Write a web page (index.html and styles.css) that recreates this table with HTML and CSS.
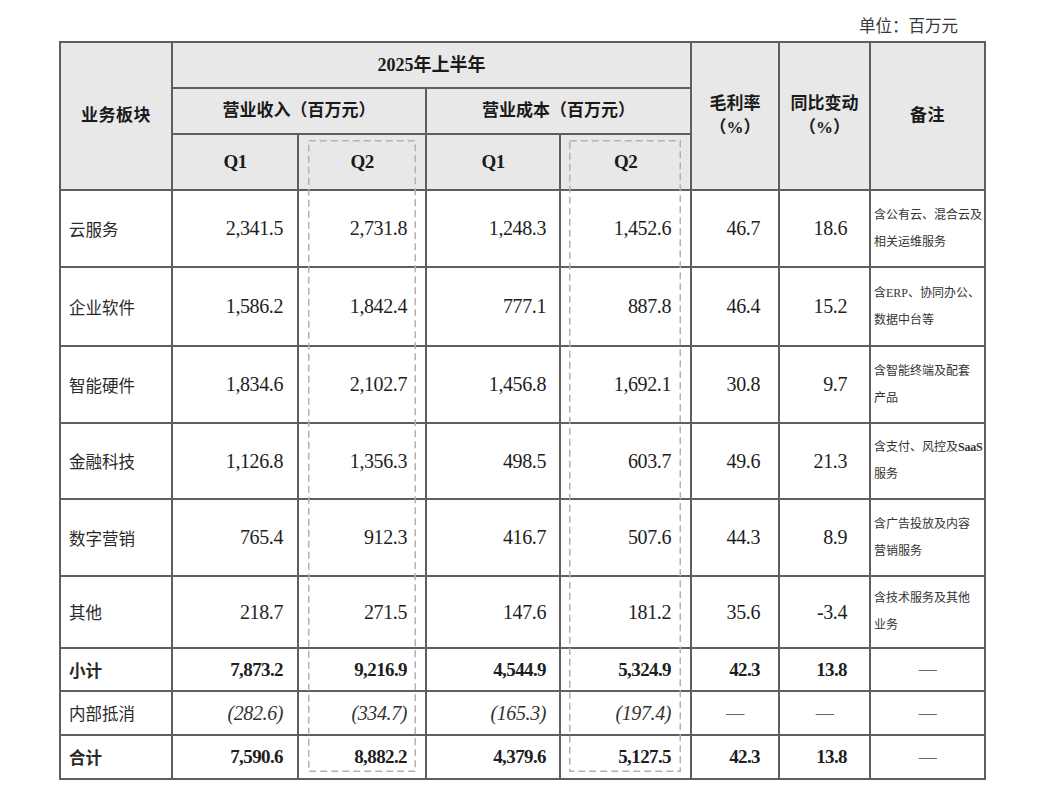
FILE: index.html
```html
<!DOCTYPE html>
<html lang="zh-CN">
<head>
<meta charset="utf-8">
<title>2025年上半年业务板块</title>
<link rel="stylesheet" href="styles.css">
</head>
<body>
<div class="page">
  <div class="unit">单位：百万元</div>
  <div class="table-wrap">
    <table class="fin">
      <colgroup>
        <col class="c1"><col class="c2"><col class="c3"><col class="c4"><col class="c5"><col class="c6"><col class="c7"><col class="c8">
      </colgroup>
      <thead>
        <tr class="h1">
          <th rowspan="3" class="seg">业务板块</th>
          <th colspan="4" class="year">2025年上半年</th>
          <th rowspan="3" class="two">毛利率<br>（%）</th>
          <th rowspan="3" class="two">同比变动<br>（%）</th>
          <th rowspan="3" class="seg">备注</th>
        </tr>
        <tr class="h2">
          <th colspan="2">营业收入（百万元）</th>
          <th colspan="2">营业成本（百万元）</th>
        </tr>
        <tr class="h3">
          <th class="q">Q1</th><th class="q">Q2</th><th class="q">Q1</th><th class="q">Q2</th>
        </tr>
      </thead>
      <tbody>
        <tr class="r77">
          <td class="lbl">云服务</td><td>2,341.5</td><td>2,731.8</td><td>1,248.3</td><td>1,452.6</td><td>46.7</td><td>18.6</td>
          <td class="note">含公有云、混合云及<br>相关运维服务</td>
        </tr>
        <tr class="r79">
          <td class="lbl">企业软件</td><td>1,586.2</td><td>1,842.4</td><td>777.1</td><td>887.8</td><td>46.4</td><td>15.2</td>
          <td class="note">含ERP、协同办公、<br>数据中台等</td>
        </tr>
        <tr class="r77">
          <td class="lbl">智能硬件</td><td>1,834.6</td><td>2,102.7</td><td>1,456.8</td><td>1,692.1</td><td>30.8</td><td>9.7</td>
          <td class="note">含智能终端及配套<br>产品</td>
        </tr>
        <tr class="r76">
          <td class="lbl">金融科技</td><td>1,126.8</td><td>1,356.3</td><td>498.5</td><td>603.7</td><td>49.6</td><td>21.3</td>
          <td class="note">含支付、风控及<b>SaaS</b><br>服务</td>
        </tr>
        <tr class="r77">
          <td class="lbl">数字营销</td><td>765.4</td><td>912.3</td><td>416.7</td><td>507.6</td><td>44.3</td><td>8.9</td>
          <td class="note">含广告投放及内容<br>营销服务</td>
        </tr>
        <tr class="r72">
          <td class="lbl">其他</td><td>218.7</td><td>271.5</td><td>147.6</td><td>181.2</td><td>35.6</td><td>-3.4</td>
          <td class="note">含技术服务及其他<br>业务</td>
        </tr>
        <tr class="r43 bold">
          <td class="lbl">小计</td><td>7,873.2</td><td>9,216.9</td><td>4,544.9</td><td>5,324.9</td><td>42.3</td><td>13.8</td>
          <td class="dash">—</td>
        </tr>
        <tr class="r44 elim">
          <td class="lbl">内部抵消</td><td>(282.6)</td><td>(334.7)</td><td>(165.3)</td><td>(197.4)</td>
          <td class="dash">—</td><td class="dash">—</td><td class="dash">—</td>
        </tr>
        <tr class="r44 bold">
          <td class="lbl">合计</td><td>7,590.6</td><td>8,882.2</td><td>4,379.6</td><td>5,127.5</td><td>42.3</td><td>13.8</td>
          <td class="dash">—</td>
        </tr>
      </tbody>
    </table>
    <svg class="hl hl-rev" viewBox="0 0 108 632" preserveAspectRatio="none" aria-hidden="true">
      <rect x="0.75" y="0.75" width="106.5" height="630.5" />
    </svg>
    <svg class="hl hl-cost" viewBox="0 0 112 632" preserveAspectRatio="none" aria-hidden="true">
      <rect x="0.75" y="0.75" width="110.5" height="630.5" />
    </svg>
  </div>
</div>
</body>
</html>
```

FILE: styles.css
```css
html, body {
  margin: 0;
  padding: 0;
  background: #ffffff;
}

body {
  font-family: "Liberation Serif", "Noto Sans CJK SC", serif;
  color: #1c1c1c;
  width: 1055px;
  height: 787px;
  overflow: hidden;
}

.page {
  padding-left: 59px;
  width: 927px;
}

.unit {
  height: 41px;
  box-sizing: border-box;
  display: flex;
  justify-content: flex-end;
  align-items: flex-start;
  padding-top: 12px;
  padding-right: 28px;
  font-family: "Noto Sans CJK SC", sans-serif;
  font-size: 16.5px;
  line-height: 26px;
  color: #3a3a3a;
}

.table-wrap {
  position: relative;
  width: 927px;
}

.fin {
  border-collapse: collapse;
  table-layout: fixed;
  width: 927px;
}

.c1 { width: 112px; }
.c2 { width: 126px; }
.c3 { width: 128px; }
.c4 { width: 134px; }
.c5 { width: 131px; }
.c6 { width: 88px; }
.c7 { width: 91px; }
.c8 { width: 115px; }

.fin th,
.fin td {
  border: 2px solid #5e5e5e;
  padding: 0;
  vertical-align: middle;
}

.fin th {
  background: #e8e8e8;
  font-family: "Liberation Serif", "Noto Sans CJK SC", serif;
  font-weight: 700;
  font-size: 17px;
  color: #1a1a1a;
  text-align: center;
  line-height: 24px;
}

.fin th.seg {
  letter-spacing: 0.5px;
}

.fin th.year {
  font-size: 18px;
}

.fin th.q {
  font-size: 19px;
  letter-spacing: -0.6px;
}

.fin th.two {
  line-height: 24px;
}

.h1 { height: 46px; }
.h2 { height: 46px; }
.h3 { height: 56px; }

.r77 { height: 77px; }
.r79 { height: 79px; }
.r76 { height: 76px; }
.r72 { height: 72px; }
.r43 { height: 43px; }
.r44 { height: 44px; }

.fin td {
  font-size: 20px;
  letter-spacing: -0.4px;
  text-align: right;
  color: #1e1e1e;
}

.fin td:nth-child(2) { padding-right: 14px; }
.fin td:nth-child(3) { padding-right: 18px; }
.fin td:nth-child(4) { padding-right: 13px; }
.fin td:nth-child(5) { padding-right: 19px; }
.fin td:nth-child(6) { padding-right: 18px; }
.fin td:nth-child(7) { padding-right: 22px; }

.fin td.lbl {
  text-align: left;
  padding-left: 8px;
  padding-right: 0;
  font-family: "Noto Sans CJK SC", sans-serif;
  font-size: 16.5px;
  letter-spacing: 0;
  color: #2a2a2a;
}

.fin td.note {
  text-align: left;
  white-space: nowrap;
  padding: 0 0 0 3px;
  font-family: "Liberation Serif", "Noto Sans CJK SC", serif;
  font-size: 12px;
  letter-spacing: 0;
  line-height: 27px;
  color: #333333;
}

.fin td.note b {
  font-weight: 700;
  letter-spacing: -0.2px;
}

.fin td.dash {
  text-align: center;
  padding: 0;
  font-family: "Liberation Serif", serif;
  font-size: 18px;
  color: #666666;
  font-weight: 400;
  font-style: normal;
}

.bold td {
  font-weight: 700;
  font-size: 19px;
  letter-spacing: -0.6px;
}

.bold td.lbl {
  font-weight: 700;
  font-size: 16.5px;
}

.elim td {
  font-style: italic;
  color: #333333;
}

.elim td.lbl {
  font-style: normal;
}

.hl {
  position: absolute;
  top: 99px;
  height: 632px;
  overflow: visible;
  pointer-events: none;
}

.hl rect {
  fill: none;
  stroke: #bdaeae;
  stroke-width: 1.5;
  stroke-dasharray: 7 4;
}

.hl-rev {
  left: 249px;
  width: 108px;
}

.hl-cost {
  left: 510px;
  width: 112px;
}
```
